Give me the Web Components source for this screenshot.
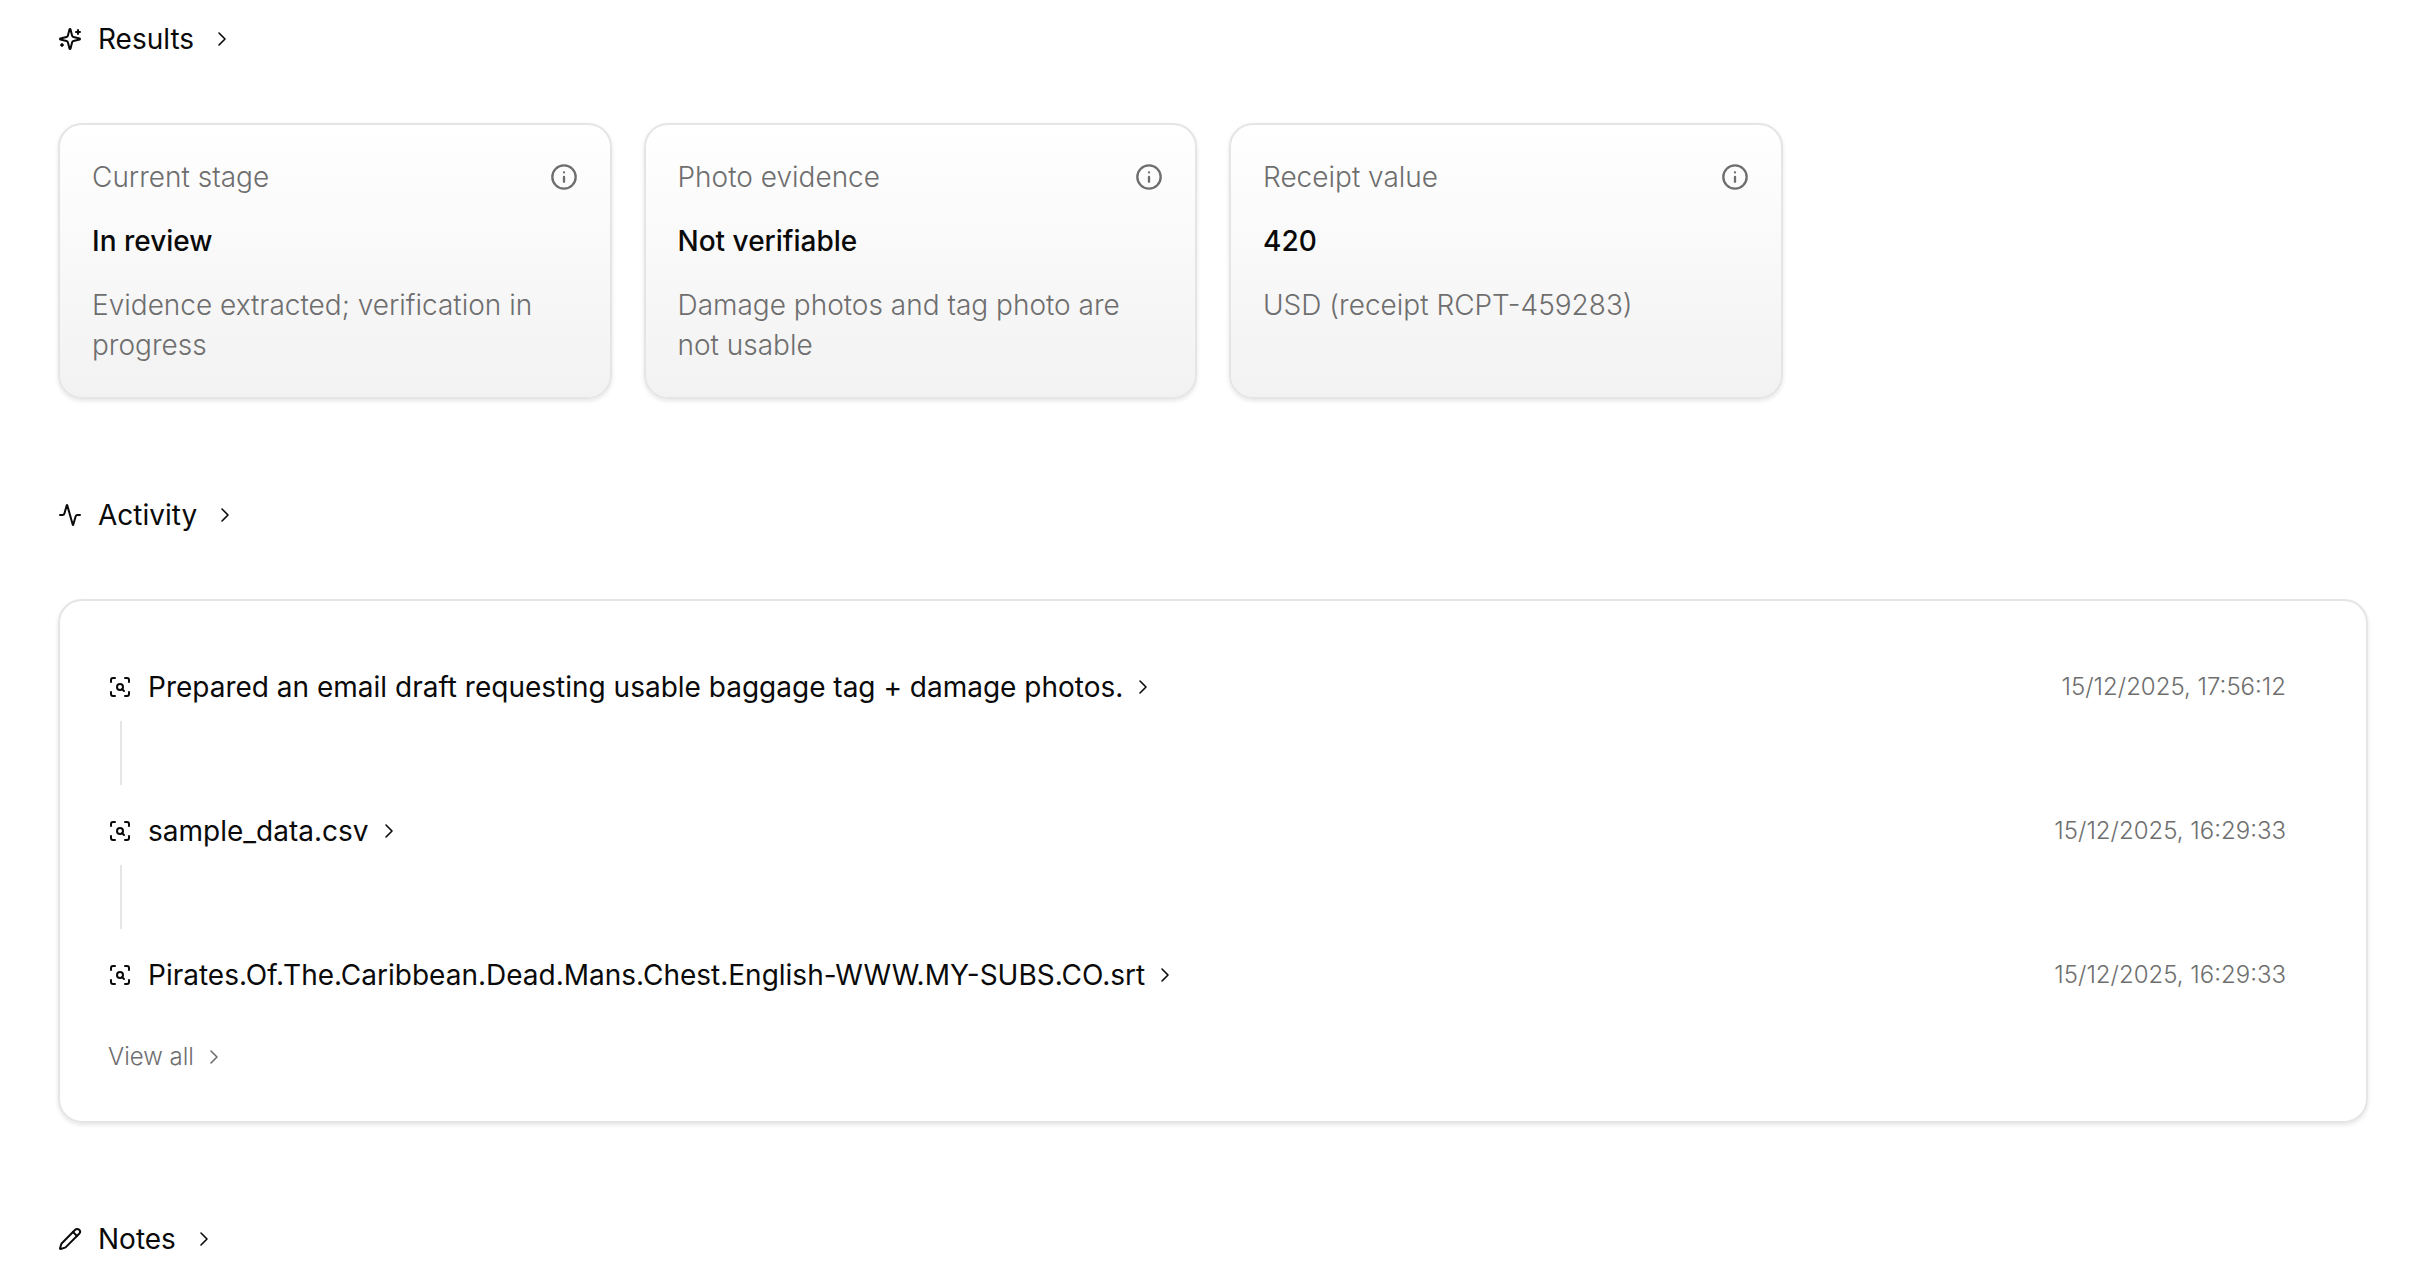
<!DOCTYPE html>
<html lang="en">
<head>
<meta charset="utf-8">
<meta name="viewport" content="width=device-width, initial-scale=1">
<title>Results</title>
<style>
  body {
    margin: 0;
    background: #fff;
    color: #0a0a0a;
    font: 400 28px/40px Inter, "Liberation Sans", sans-serif;
    --muted: #6e6e6e;
    --line: #e5e5e5;
    --shadow: 0 2px 4px rgba(0, 0, 0, 0.1);
  }

  main {
    display: flex;
    flex-direction: column;
    gap: 96px;
    padding: 19px 48px 0 58px;
  }

  .cards {
    display: grid;
    grid-template-columns: repeat(4, 1fr);
    gap: 32px;
  }
</style>
</head>
<body>
<main>
  <page-section icon="sparkles" label="Results">
    <div class="cards">
      <result-card label="Current stage" value="In review">Evidence extracted; verification in progress</result-card>
      <result-card label="Photo evidence" value="Not verifiable">Damage photos and tag photo are not usable</result-card>
      <result-card label="Receipt value" value="420">USD (receipt RCPT-459283)</result-card>
    </div>
  </page-section>

  <page-section icon="activity" label="Activity">
    <activity-panel>
      <activity-item time="15/12/2025, 17:56:12">Prepared an email draft requesting usable baggage tag + damage photos.</activity-item>
      <activity-item time="15/12/2025, 16:29:33">sample_data.csv</activity-item>
      <activity-item time="15/12/2025, 16:29:33">Pirates.Of.The.Caribbean.Dead.Mans.Chest.English-WWW.MY-SUBS.CO.srt</activity-item>
    </activity-panel>
  </page-section>

  <page-section icon="pencil" label="Notes"></page-section>
</main>

<script>
const ICONS = {
  sparkles: `
    <path d="M9.937 15.5A2 2 0 0 0 8.5 14.063l-6.135-1.582a.5.5 0 0 1 0-.962L8.5 9.936A2 2 0 0 0 9.937 8.5l1.582-6.135a.5.5 0 0 1 .963 0L14.063 8.5A2 2 0 0 0 15.5 9.937l6.135 1.581a.5.5 0 0 1 0 .964L15.5 14.063a2 2 0 0 0-1.437 1.437l-1.582 6.135a.5.5 0 0 1-.963 0z"/>
    <path d="M20 3v4M22 5h-4M4 17v2M5 18H3"/>`,
  activity: `<path d="M22 12h-2.48a2 2 0 0 0-1.93 1.46l-2.35 8.36a.25.25 0 0 1-.48 0L9.24 2.18a.25.25 0 0 0-.48 0l-2.35 8.36A2 2 0 0 1 4.49 12H2"/>`,
  pencil: `
    <path d="M21.174 6.812a1 1 0 0 0-3.986-3.987L3.842 16.174a2 2 0 0 0-.5.83l-1.321 4.352a.5.5 0 0 0 .623.622l4.353-1.32a2 2 0 0 0 .83-.497z"/>
    <path d="m15 5 4 4"/>`,
  scan: `
    <path d="M3 7V5a2 2 0 0 1 2-2h2M17 3h2a2 2 0 0 1 2 2v2M21 17v2a2 2 0 0 1-2 2h-2M7 21H5a2 2 0 0 1-2-2v-2"/>
    <circle cx="12" cy="12" r="3"/>
    <path d="m16 16-1.9-1.9"/>`,
  chevron: `<path d="m9 18 6-6-6-6"/>`,
  info: `
    <circle cx="12" cy="12" r="10"/>
    <path d="M12 16v-4M12 8h.01"/>`,
};

customElements.define(
  "ui-icon",
  class extends HTMLElement {
    constructor() {
      super();
      this._shadow = this.attachShadow({ mode: "open" });
    }

    connectedCallback() {
      this._shadow.innerHTML = `
        <style>
        :host {
          display: block;
          flex: none;
          width: 24px;
          height: 24px;
        }

        :host([size="large"]) {
          width: 28px;
          height: 28px;
        }

        svg {
          display: block;
          width: 100%;
          height: 100%;
          fill: none;
          stroke: currentColor;
          stroke-width: 2;
          stroke-linecap: round;
          stroke-linejoin: round;
        }

        :host([name="chevron"]) svg {
          stroke-width: 1.6;
        }
        </style>
        <svg viewBox="0 0 24 24" aria-hidden="true">${ICONS[this.getAttribute("name")]}</svg>
      `;
    }
  }
);

customElements.define(
  "page-section",
  class extends HTMLElement {
    constructor() {
      super();
      this._shadow = this.attachShadow({ mode: "open" });
    }

    connectedCallback() {
      this._shadow.innerHTML = `
        <style>
        :host {
          display: block;
        }

        section {
          display: flex;
          flex-direction: column;
          gap: 64px;
        }

        h2 {
          margin: 0;
          font: inherit;
        }

        a {
          display: inline-flex;
          align-items: center;
          gap: 16px;
          color: inherit;
          text-decoration: none;
          vertical-align: top;
        }
        </style>
        <section>
          <h2>
            <a href="#${this.getAttribute("icon")}">
              <ui-icon name="${this.getAttribute("icon")}"></ui-icon>
              <span>${this.getAttribute("label")}</span>
              <ui-icon name="chevron"></ui-icon>
            </a>
          </h2>
          <slot></slot>
        </section>
      `;
    }
  }
);

customElements.define(
  "result-card",
  class extends HTMLElement {
    constructor() {
      super();
      this._shadow = this.attachShadow({ mode: "open" });
    }

    connectedCallback() {
      const label = this.getAttribute("label");

      this._shadow.innerHTML = `
        <style>
        :host {
          display: flex;
          flex-direction: column;
          gap: 24px;
          padding: 32px;
          border: 2px solid var(--line);
          border-radius: 24px;
          background: linear-gradient(#fff, #f2f2f2);
          background-clip: padding-box;
          box-shadow: var(--shadow);
        }

        header {
          display: flex;
          align-items: center;
          justify-content: space-between;
        }

        h3,
        p {
          margin: 0;
          font: inherit;
          font-weight: 300;
        }

        h3,
        .description,
        button {
          color: var(--muted);
        }

        .value {
          font-weight: 500;
        }

        button {
          padding: 0;
          border: none;
          background: none;
          cursor: pointer;
        }
        </style>
        <header>
          <h3>${label}</h3>
          <button type="button" aria-label="About ${label}"><ui-icon name="info" size="large"></ui-icon></button>
        </header>
        <p class="value">${this.getAttribute("value")}</p>
        <p class="description"><slot></slot></p>
      `;
    }
  }
);

customElements.define(
  "activity-item",
  class extends HTMLElement {
    constructor() {
      super();
      this._shadow = this.attachShadow({ mode: "open" });
    }

    connectedCallback() {
      this._shadow.innerHTML = `
        <style>
        :host {
          display: block;
          padding: 18px 32px 8px 0;
        }

        :host(:last-child) {
          padding-bottom: 0;
        }

        .row {
          display: flex;
          align-items: center;
          justify-content: space-between;
          gap: 32px;
        }

        a {
          display: flex;
          align-items: center;
          gap: 8px;
          color: inherit;
          text-decoration: none;
        }

        .text {
          margin-left: 8px;
        }

        time {
          color: var(--muted);
          font-size: 24px;
          font-weight: 300;
          white-space: nowrap;
        }

        /* connector down to the next entry */
        .line {
          width: 2px;
          height: 64px;
          margin: 14px 0 0 12px;
          background: var(--line);
        }

        :host(:last-child) .line {
          display: none;
        }
        </style>
        <div class="row">
          <a href="#entry">
            <ui-icon name="scan"></ui-icon>
            <span class="text"><slot></slot></span>
            <ui-icon name="chevron"></ui-icon>
          </a>
          <time>${this.getAttribute("time")}</time>
        </div>
        <div class="line"></div>
      `;
    }
  }
);

customElements.define(
  "activity-panel",
  class extends HTMLElement {
    constructor() {
      super();
      this._shadow = this.attachShadow({ mode: "open" });
      this._shadow.innerHTML = `
        <style>
        :host {
          display: block;
          padding: 48px;
          border: 2px solid var(--line);
          border-radius: 24px;
          box-shadow: var(--shadow);
        }

        a {
          display: flex;
          align-items: center;
          gap: 8px;
          width: max-content;
          margin-top: 46px;
          color: var(--muted);
          font-size: 24px;
          font-weight: 300;
          line-height: 32px;
          text-decoration: none;
        }
        </style>
        <slot></slot>
        <a href="#all">View all <ui-icon name="chevron"></ui-icon></a>
      `;
    }
  }
);
</script>
</body>
</html>
